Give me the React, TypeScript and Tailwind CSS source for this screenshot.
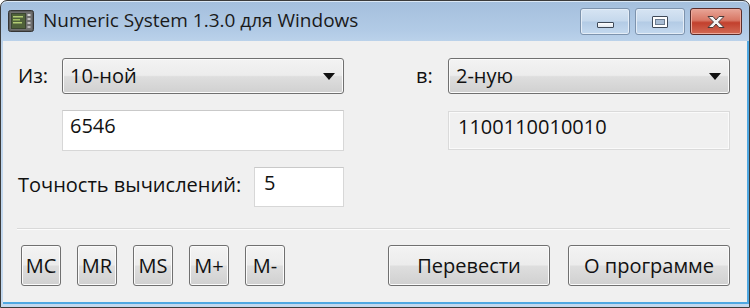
const font = "font-['Open_Sans',_'Noto_Sans',_sans-serif]";

const btnSkin =
  "border border-[#707070] rounded-[3px] bg-[linear-gradient(#f3f3f3_0%,#ececec_48%,#dedede_52%,#d0d0d0_100%)] shadow-[inset_0_0_0_1px_#fbfbfb]";

function Combo({ value }: { value: string }) {
  return (
    <div className={"w-[282px] h-[36px] flex items-center justify-between pl-[7px] pr-[8px] " + btnSkin}>
      <span className="leading-[28px]">{value}</span>
      <svg width="12" height="7" viewBox="0 0 12 7">
        <path d="M0 0H12L6 7Z" fill="#111" />
      </svg>
    </div>
  );
}

function SmallBtn({ label }: { label: string }) {
  return (
    <div className={"w-[40px] h-[41px] flex items-center justify-center " + btnSkin}>
      <span className="leading-[28px]">{label}</span>
    </div>
  );
}

function WideBtn({ label }: { label: string }) {
  return (
    <div className={"w-[162px] h-[41px] flex items-center justify-center " + btnSkin}>
      <span className="leading-[28px]">{label}</span>
    </div>
  );
}

function AppIcon() {
  return (
    <svg width="26" height="22" viewBox="0 0 26 22">
      <rect x="0.5" y="0.5" width="25" height="21" rx="2" fill="#5e5e5e" stroke="#353535" />
      <rect x="2" y="2" width="22" height="18" rx="1" fill="#707070" />
      <rect x="3" y="3" width="15" height="16" fill="#3a4530" />
      <rect x="4" y="4" width="13" height="14" fill="#4f613a" />
      <rect x="5" y="6" width="10" height="1.5" fill="#b3cc74" />
      <rect x="5" y="9" width="7" height="1.5" fill="#a0bf60" />
      <rect x="5" y="12" width="9" height="1.5" fill="#b3cc74" />
      <rect x="19.5" y="4" width="3" height="2" fill="#d0d0d0" />
      <rect x="19.5" y="8" width="3" height="2" fill="#c0c0c0" />
      <rect x="19.5" y="12" width="3" height="2" fill="#c0c0c0" />
      <rect x="19.5" y="16" width="3" height="2" fill="#b5b5b5" />
    </svg>
  );
}

export default function App() {
  return (
    <div className={"w-[750px] h-[308px] bg-white text-[20px] text-[#111] " + font}>
      <div className="w-[750px] h-[308px] rounded-t-[7px] border border-[#3b3b3b] bg-[linear-gradient(#a4bfdd_0px,#b2cbe6_30px,#bfd5ec_45px,#c3d8ee_100%)] shadow-[inset_0_1px_0_#dbe8f5] flex flex-col overflow-hidden">
        {/* Title bar */}
        <div className="h-[40px] flex items-start shrink-0">
          <div className="ml-[7px] mt-[9px]">
            <AppIcon />
          </div>
          <div className="ml-[9px] mt-[5px] text-[19px] leading-[28px] text-[#1a1a1a]">
            Numeric System 1.3.0 для Windows
          </div>
          <div className="ml-auto mr-[7px] mt-[7px] flex gap-[5px]">
            <div className="w-[50px] h-[27px] rounded-[3px] border border-[#7d93ad] bg-[linear-gradient(#d6e4f3_0%,#c5d8ec_48%,#b3cbe5_52%,#c4d9ef_100%)] shadow-[inset_0_0_0_1px_#e4edf7] flex items-end justify-center pb-[6px]">
              <div className="w-[17px] h-[6px] rounded-[1px] border border-[#3f4a58] bg-[linear-gradient(#ffffff,#dfe6ee)]" />
            </div>
            <div className="w-[50px] h-[27px] rounded-[3px] border border-[#7d93ad] bg-[linear-gradient(#d6e4f3_0%,#c5d8ec_48%,#b3cbe5_52%,#c4d9ef_100%)] shadow-[inset_0_0_0_1px_#e4edf7] flex items-center justify-center">
              <div className="w-[16px] h-[12px] rounded-[1px] border border-[#3f4a58] bg-white p-[2px]">
                <div className="w-full h-full border border-[#6d7d90] bg-[#a9bdd4]" />
              </div>
            </div>
            <div className="w-[52px] h-[27px] rounded-[3px] border border-[#5a2c2a] bg-[linear-gradient(#e8a597_0%,#d87765_45%,#c2402d_55%,#d26a55_100%)] shadow-[inset_0_0_0_1px_#eda99b] flex items-center justify-center">
              <svg width="20" height="14" viewBox="0 0 20 14">
                <path
                  d="M2 1.5H7L10 5L13 1.5H18L12.5 7L18 12.5H13L10 9L7 12.5H2L7.5 7Z"
                  fill="#f4f4f4"
                  stroke="#4a3b3a"
                  strokeWidth="1"
                  strokeLinejoin="round"
                />
              </svg>
            </div>
          </div>
        </div>

        {/* Body frame */}
        <div className="flex-1 flex pl-[2px] pb-[3px] pr-[1px]">
          <div className="flex-1 flex flex-col bg-[#f0f0f0] border-r-[2px] border-b-[2px] border-[#4fa8e2] pl-[15px] pr-[17px] pt-[17px]">
            {/* Row 1 */}
            <div className="flex items-center justify-between h-[36px]">
              <div className="flex items-center">
                <span className="w-[44px] leading-[28px]">Из:</span>
                <Combo value="10-ной" />
              </div>
              <div className="flex items-center">
                <span className="w-[32px] leading-[28px]">в:</span>
                <Combo value="2-ную" />
              </div>
            </div>

            {/* Row 2 */}
            <div className="flex justify-between mt-[16px] h-[41px]">
              <div className="ml-[44px] w-[282px] h-[41px] bg-white border border-[#d7d7d7] border-t-[#c9c9c9] px-[7px] leading-[28px] pt-[1px]">
                6546
              </div>
              <div className="w-[282px] h-[39px] mt-[1px] bg-[#f0f0f0] border border-[#dadada] shadow-[inset_0_0_0_1px_#fafafa] px-[9px] leading-[28px] pt-[1px]">
                1100110010010
              </div>
            </div>

            {/* Row 3 */}
            <div className="flex items-center mt-[16px] h-[40px]">
              <span className="w-[236px] leading-[28px] -mt-[4px]">Точность вычислений:</span>
              <div className="w-[90px] h-[40px] bg-white border border-[#d7d7d7] border-t-[#c9c9c9] px-[9px] leading-[28px] pt-[1px]">
                5
              </div>
            </div>

            {/* Separator */}
            <div className="mt-[21px] -ml-[1px] w-[713px] border-t border-[#d9d9d9] border-b border-b-[#fcfcfc]" />

            {/* Buttons */}
            <div className="flex items-center justify-between mt-[15px]">
              <div className="flex ml-[3px] gap-[16px]">
                <SmallBtn label="MC" />
                <SmallBtn label="MR" />
                <SmallBtn label="MS" />
                <SmallBtn label="M+" />
                <SmallBtn label="M-" />
              </div>
              <div className="flex gap-[18px]">
                <WideBtn label="Перевести" />
                <WideBtn label="О программе" />
              </div>
            </div>
          </div>
        </div>
      </div>
    </div>
  );
}
